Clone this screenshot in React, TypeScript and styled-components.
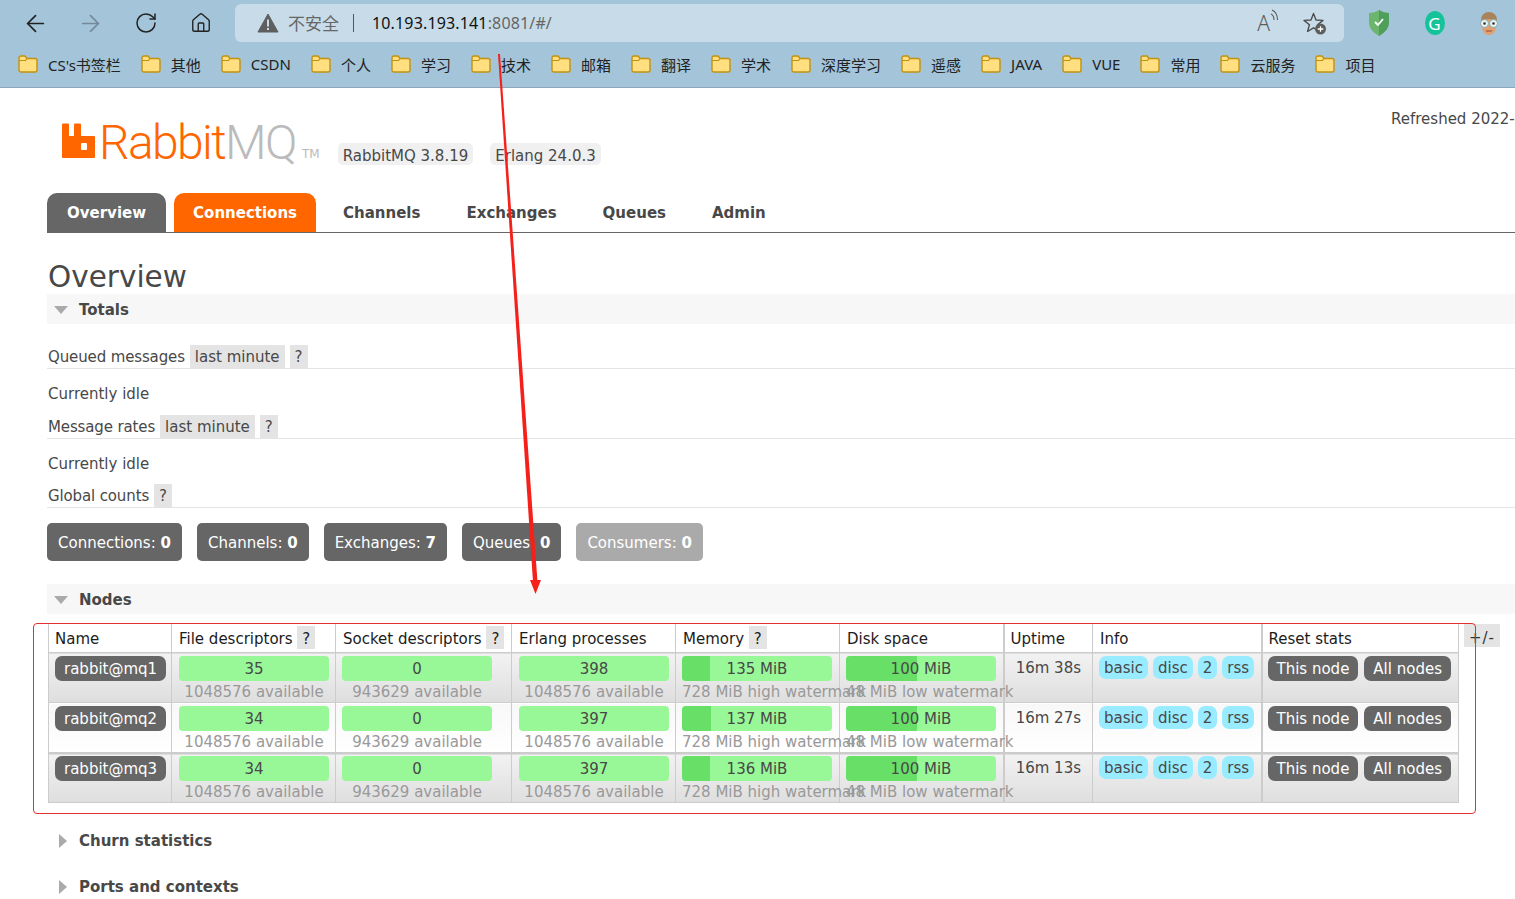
import React from 'react';
import styled, { createGlobalStyle } from 'styled-components';
import { ArrowLeft, ArrowRight, RotateCw, Home } from 'lucide-react';

const GlobalStyle = createGlobalStyle`
  html, body {
    margin: 0;
    padding: 0;
    background: #fff;
  }
  body {
    font-family: 'DejaVu Sans', Verdana, sans-serif;
    font-size: 15px;
    color: #484848;
  }
`;

const bookmarks = [
  "CS's书签栏", '其他', 'CSDN', '个人', '学习', '技术', '邮箱', '翻译', '学术',
  '深度学习', '遥感', 'JAVA', 'VUE', '常用', '云服务', '项目',
];

const tabs = ['Channels', 'Exchanges', 'Queues', 'Admin'];

const counts = [
  { label: 'Connections', value: 0 },
  { label: 'Channels', value: 0 },
  { label: 'Exchanges', value: 7 },
  { label: 'Queues', value: 0 },
  { label: 'Consumers', value: 0, muted: true },
];

const nodes = [
  { name: 'rabbit@mq1', fd: 35, proc: 398, mem: 135, memFill: 28, uptime: '16m 38s' },
  { name: 'rabbit@mq2', fd: 34, proc: 397, mem: 137, memFill: 29, uptime: '16m 27s' },
  { name: 'rabbit@mq3', fd: 34, proc: 397, mem: 136, memFill: 28, uptime: '16m 13s' },
];

const FolderIcon = () => (
  <svg width="20" height="18" viewBox="0 0 20 18">
    <path
      d="M1 4.5V3a2 2 0 0 1 2-2h4l2 2.5h8a2 2 0 0 1 2 2V15a2 2 0 0 1-2 2H3a2 2 0 0 1-2-2z"
      fill="#ffdf80"
      stroke="#c2920e"
      strokeWidth="1.4"
    />
    <path d="M1 5.5h6.5L9 3.5" fill="none" stroke="#c2920e" strokeWidth="1.2" />
  </svg>
);

const WarningIcon = () => (
  <svg width="22" height="20" viewBox="0 0 22 20">
    <path d="M11 1 21 19H1z" fill="#5f5f5f" stroke="#5f5f5f" strokeLinejoin="round" />
    <rect x="10" y="6.5" width="2" height="7" fill="#c7dce8" />
    <rect x="10" y="15" width="2" height="2" fill="#c7dce8" />
  </svg>
);

const WavesIcon = () => (
  <svg width="9" height="16" viewBox="0 0 9 16" fill="none" stroke="#5c5c5c" strokeWidth="1.1">
    <path d="M1 5c2 1 3 3 3 6" />
    <path d="M2 1c3.500 1.500 5.500 5 5.500 10" />
  </svg>
);

const StarPlusIcon = () => (
  <svg width="24" height="24" viewBox="0 0 24 24">
    <path
      d="M10.500 2.500 13 9l7 .4-5.400 4.400 1.800 6.700-5.900-3.700-5.900 3.700 1.800-6.700L1 9.400 8 9z"
      fill="none"
      stroke="#4f4f4f"
      strokeWidth="1.400"
      strokeLinejoin="round"
    />
    <circle cx="17.500" cy="18" r="5.500" fill="#5d5d5d" />
    <path d="M17.500 15.200v5.600M14.700 18h5.600" stroke="#fff" strokeWidth="1.300" />
  </svg>
);

const ShieldIcon = () => (
  <svg width="22" height="28" viewBox="0 0 22 28">
    <path d="M11 1c3 2 6 3 10 3v9c0 7-5 11-10 14C6 24 1 20 1 13V4c4 0 7-1 10-3z" fill="#6cb56d" />
    <path d="M11 1c3 2 6 3 10 3v9c0 7-5 11-10 14z" fill="#4f9f5c" />
    <path d="M7 13l3 3 5-6" fill="none" stroke="#fff" strokeWidth="1.800" />
  </svg>
);

const AvatarIcon = () => (
  <svg width="20" height="26" viewBox="0 0 20 26">
    <path d="M2 10a8 8 0 0 1 16 0v5H2z" fill="#a8825a" />
    <ellipse cx="10" cy="17" rx="7" ry="8" fill="#e0a070" />
    <circle cx="5.500" cy="13.500" r="4" fill="#e8f4f4" stroke="#8aa" strokeWidth="1" />
    <circle cx="14.500" cy="13.500" r="4" fill="#e8f4f4" stroke="#8aa" strokeWidth="1" />
    <circle cx="5.500" cy="13.500" r="1.300" fill="#333" />
    <circle cx="14.500" cy="13.500" r="1.300" fill="#333" />
    <path d="M7 21h6" stroke="#a05a40" strokeWidth="1.200" />
  </svg>
);

const LogoMark = () => (
  <svg width="33" height="35" viewBox="0 0 33 35">
    <path
      d="M0 1.500a1 1 0 0 1 1-1h5a1 1 0 0 1 1 1V13h5V1.500a1 1 0 0 1 1-1h5a1 1 0 0 1 1 1V13h13a1 1 0 0 1 1 1v20a1 1 0 0 1-1 1H1a1 1 0 0 1-1-1z"
      fill="#f60"
    />
    <rect x="19" y="20" width="6" height="7" rx="1" fill="#fff" />
  </svg>
);

const App: React.FC = () => (
  <Page>
    <GlobalStyle />
    <BrowserChrome>
      <Toolbar>
        <NavButtons>
          <ArrowLeft size={27} color="#222" strokeWidth={1.500} />
          <ArrowRight size={27} color="#74899a" strokeWidth={1.500} />
          <RotateCw size={24} color="#222" strokeWidth={1.500} />
          <Home size={22} color="#222" strokeWidth={1.500} />
        </NavButtons>
        <AddressBar>
          <WarningIcon />
          <Insecure>不安全</Insecure>
          <Divider />
          <Url>
            10.193.193.141<UrlRest>:8081/#/</UrlRest>
          </Url>
          <AddressActions>
            <ReadAloud>
              <span>A</span>
              <WavesIcon />
            </ReadAloud>
            <StarPlusIcon />
          </AddressActions>
        </AddressBar>
        <Extensions>
          <ShieldIcon />
          <GrammarlyBadge>G</GrammarlyBadge>
          <AvatarIcon />
        </Extensions>
      </Toolbar>
      <BookmarkBar>
        {bookmarks.map((name) => (
          <Bookmark key={name}>
            <FolderIcon />
            {name}
          </Bookmark>
        ))}
      </BookmarkBar>
    </BrowserChrome>

    <Content>
      <Header>
        <Brand>
          <LogoMark />
          <LogoText>
            Rabbit<LogoGrey>MQ</LogoGrey>
          </LogoText>
          <Trademark>TM</Trademark>
          <Version>RabbitMQ 3.8.19</Version>
          <Version>Erlang 24.0.3</Version>
        </Brand>
        <Refreshed>Refreshed 2022-04-09 16:27:38</Refreshed>
      </Header>

      <TabBar>
        <Tab $bg="#666666">Overview</Tab>
        <Tab $bg="#ff6600">Connections</Tab>
        {tabs.map((tab) => (
          <Tab key={tab}>{tab}</Tab>
        ))}
      </TabBar>

      <Title>Overview</Title>
      <SectionBar>
        <TriangleDown />
        Totals
      </SectionBar>

      <LegendRow $top={21}>
        Queued messages<Pill>last minute</Pill>
        <Pill>?</Pill>
      </LegendRow>
      <IdleText $top={15}>Currently idle</IdleText>
      <LegendRow $top={11}>
        Message rates<Pill>last minute</Pill>
        <Pill>?</Pill>
      </LegendRow>
      <IdleText $top={15}>Currently idle</IdleText>
      <LegendRow $top={10}>
        Global counts<Pill>?</Pill>
      </LegendRow>

      <CountRow>
        {counts.map((c) => (
          <CountBox key={c.label} $muted={c.muted}>
            {c.label}: <b>{c.value}</b>
          </CountBox>
        ))}
      </CountRow>

      <SectionBar $top={23}>
        <TriangleDown />
        Nodes
      </SectionBar>

      <NodesArea>
        <NodesTable>
          <thead>
            <tr>
              <HeadCell $w={123}>Name</HeadCell>
              <HeadCell $w={164}>
                File descriptors <Hint>?</Hint>
              </HeadCell>
              <HeadCell $w={176}>
                Socket descriptors <Hint>?</Hint>
              </HeadCell>
              <HeadCell $w={164}>Erlang processes</HeadCell>
              <HeadCell $w={164}>
                Memory <Hint>?</Hint>
              </HeadCell>
              <HeadCell $w={164}>Disk space</HeadCell>
              <HeadCell $w={89} $heavy>
                Uptime
              </HeadCell>
              <HeadCell $w={169}>Info</HeadCell>
              <HeadCell $w={197} $heavy>
                Reset stats
              </HeadCell>
            </tr>
          </thead>
          <tbody>
            {nodes.map((node, i) => (
              <NodeRow key={node.name} $alt={i % 2 === 0} $thick={i === 2}>
                <Cell>
                  <DarkButton>{node.name}</DarkButton>
                </Cell>
                <Cell $wide>
                  <Meter>
                    <MeterBar>{node.fd}</MeterBar>
                    <MeterSub>1048576 available</MeterSub>
                  </Meter>
                </Cell>
                <Cell>
                  <Meter>
                    <MeterBar>0</MeterBar>
                    <MeterSub>943629 available</MeterSub>
                  </Meter>
                </Cell>
                <Cell $wide>
                  <Meter>
                    <MeterBar>{node.proc}</MeterBar>
                    <MeterSub>1048576 available</MeterSub>
                  </Meter>
                </Cell>
                <Cell>
                  <Meter>
                    <MeterBar>
                      <MeterFill style={{ width: node.memFill }} />
                      <MeterLabel>{node.mem} MiB</MeterLabel>
                    </MeterBar>
                    <MeterSub>728 MiB high watermark</MeterSub>
                  </Meter>
                </Cell>
                <Cell>
                  <Meter>
                    <MeterBar>
                      <MeterFill style={{ width: 71 }} />
                      <MeterLabel>100 MiB</MeterLabel>
                    </MeterBar>
                    <MeterSub>48 MiB low watermark</MeterSub>
                  </Meter>
                </Cell>
                <UptimeCell $heavy>{node.uptime}</UptimeCell>
                <Cell>
                  <TagList>
                    <Tag>basic</Tag>
                    <Tag>disc</Tag>
                    <Tag>2</Tag>
                    <Tag>rss</Tag>
                  </TagList>
                </Cell>
                <Cell $heavy>
                  <ResetButtons>
                    <DarkButton>This node</DarkButton>
                    <DarkButton>All nodes</DarkButton>
                  </ResetButtons>
                </Cell>
              </NodeRow>
            ))}
          </tbody>
        </NodesTable>
        <ColumnToggle>+/-</ColumnToggle>
      </NodesArea>

      <CollapsedRow $top={28}>
        <TriangleRight />
        Churn statistics
      </CollapsedRow>
      <CollapsedRow $top={26}>
        <TriangleRight />
        Ports and contexts
      </CollapsedRow>
    </Content>

    <RedFrame />
    <RedArrow viewBox="0 0 1515 899">
      <polygon points="498,54 500,54 537.500,582 533,582" fill="#f5201a" />
      <polygon points="530,580 541,580 535.500,594" fill="#f5201a" />
    </RedArrow>
  </Page>
);

export default App;

const Page = styled.div`
  position: relative;
  width: 1515px;
  height: 899px;
  overflow: hidden;
  background: #fff;
`;

const BrowserChrome = styled.div`
  height: 87px;
  background: #a3c4d9;
  border-bottom: 1px solid #8ba6b8;
  font-family: 'Noto Sans', 'Noto Sans CJK SC', sans-serif;
`;

const Toolbar = styled.div`
  display: flex;
  align-items: center;
  height: 46px;
`;

const NavButtons = styled.div`
  display: grid;
  grid-template-columns: repeat(4, 55px);
  justify-items: center;
  align-items: center;
  margin-left: 8px;
  margin-right: 7px;
`;

const AddressBar = styled.div`
  display: flex;
  align-items: center;
  width: 1109px;
  height: 38px;
  box-sizing: border-box;
  padding: 0 17px 0 22px;
  background: #c7dce8;
  border-radius: 6px;
`;

const Insecure = styled.span`
  margin-left: 9px;
  margin-bottom: 2px;
  font-size: 17px;
  color: #666;
`;

const Divider = styled.span`
  width: 1px;
  height: 18px;
  margin: 0 18px 0 14px;
  background: #555;
`;

const Url = styled.span`
  font-size: 16px;
  letter-spacing: 0.15px;
  color: #111;
`;

const UrlRest = styled.span`
  color: #666;
`;

const AddressActions = styled.div`
  display: flex;
  align-items: center;
  gap: 24px;
  margin-left: auto;
`;

const ReadAloud = styled.div`
  display: flex;
  align-items: flex-start;
  font-size: 21px;
  font-weight: 300;
  color: #5c5c5c;
`;

const Extensions = styled.div`
  display: flex;
  align-items: center;
  justify-content: space-between;
  width: 131px;
  margin-left: 24px;
`;

const GrammarlyBadge = styled.span`
  display: flex;
  align-items: center;
  justify-content: center;
  width: 20px;
  height: 24px;
  border-radius: 50%;
  background: #15c39a;
  color: #fff;
  font-size: 17px;
`;

const BookmarkBar = styled.div`
  display: flex;
  align-items: center;
  gap: 20px;
  height: 36px;
  padding-left: 18px;
`;

const Bookmark = styled.span`
  display: flex;
  align-items: center;
  gap: 10px;
  font-size: 15px;
  color: #222;
  white-space: nowrap;
`;

const Content = styled.div`
  padding-left: 47px;
`;

const Header = styled.header`
  display: grid;
  grid-template-columns: 1344px 1fr;
  height: 105px;
  overflow: hidden;
`;

const Brand = styled.div`
  display: flex;
  align-items: flex-end;
  height: 70px;
  padding-left: 15px;
`;

const LogoText = styled.span`
  margin-left: 4px;
  margin-bottom: -13px;
  font-family: 'Roboto', sans-serif;
  font-weight: 300;
  font-size: 48px;
  line-height: 56px;
  letter-spacing: -1.6px;
  color: #f60;
`;

const LogoGrey = styled.span`
  color: #bbb;
`;

const Trademark = styled.span`
  margin: 0 18px -3px 6px;
  font-size: 12px;
  color: #bbb;
`;

const Version = styled.span`
  margin-right: 17px;
  margin-bottom: -7px;
  padding: 0 5px;
  height: 22px;
  line-height: 26px;
  background: #f0f0f0;
  border-radius: 5px;
  white-space: nowrap;
`;

const Refreshed = styled.div`
  margin-top: 22px;
  white-space: nowrap;
`;

const TabBar = styled.nav`
  display: flex;
  gap: 8px;
  height: 39px;
  border-bottom: 1px solid #666;
`;

const Tab = styled.a<{ $bg?: string }>`
  padding: 0 19px;
  line-height: 41px;
  font-weight: 700;
  font-size: 15px;
  border-radius: 10px 10px 0 0;
  color: ${({ $bg }) => ($bg ? '#fff' : '#484848')};
  background: ${({ $bg }) => $bg ?? 'transparent'};

  &:first-child {
    padding: 0 20px;
  }
`;

const Title = styled.h1`
  margin: 28px 0 0 1px;
  font-size: 29.5px;
  font-weight: 400;
  line-height: 33px;
`;

const SectionBar = styled.div<{ $top?: number }>`
  display: flex;
  align-items: center;
  height: 30px;
  box-sizing: border-box;
  margin-top: ${({ $top }) => $top ?? 0}px;
  padding: 2px 0 0 7px;
  background: #f7f7f7;
  font-weight: 700;
`;

const TriangleDown = styled.span`
  width: 0;
  height: 0;
  margin-right: 11px;
  border-left: 7px solid transparent;
  border-right: 7px solid transparent;
  border-top: 8px solid #aaa;
`;

const TriangleRight = styled.span`
  width: 0;
  height: 0;
  margin-left: 12px;
  margin-right: 12px;
  border-top: 7px solid transparent;
  border-bottom: 7px solid transparent;
  border-left: 8px solid #aaa;
`;

const LegendRow = styled.div<{ $top: number }>`
  display: flex;
  align-items: flex-start;
  height: 23px;
  margin-top: ${({ $top }) => $top}px;
  padding-left: 1px;
  line-height: 25px;
  letter-spacing: -0.13px;
  white-space: nowrap;
  border-bottom: 1px solid #e4e4e4;
`;

const Pill = styled.span`
  margin-left: 5px;
  padding: 0 5px;
  letter-spacing: 0;
  background: #e4e4e4;
  height: 23px;
`;

const IdleText = styled.div<{ $top: number }>`
  margin-top: ${({ $top }) => $top}px;
  padding-left: 1px;
  line-height: 20px;
`;

const CountRow = styled.div`
  display: flex;
  gap: 15px;
  margin-top: 15px;
`;

const CountBox = styled.div<{ $muted?: boolean }>`
  height: 38px;
  padding: 0 11px;
  line-height: 41px;
  border-radius: 5px;
  color: #fff;
  background: ${({ $muted }) => ($muted ? '#aaa' : '#666')};
  white-space: nowrap;
`;

const NodesArea = styled.div`
  display: flex;
  align-items: flex-start;
  gap: 5px;
  margin-top: 9px;
  margin-left: 1px;
`;

const NodesTable = styled.table`
  width: 1410px;
  table-layout: fixed;
  border-collapse: collapse;
`;

const HeadCell = styled.th<{ $w: number; $heavy?: boolean }>`
  width: ${({ $w }) => $w}px;
  height: 29px;
  box-sizing: border-box;
  padding: 3px 6px 0 ${({ $heavy }) => ($heavy ? 6 : 7)}px;
  line-height: 25px;
  background: #fff;
  color: #1c1c1c;
  font-weight: 400;
  text-align: left;
  white-space: nowrap;
  border: 1px solid #ccc;
  border-top: none;
  border-left-width: ${({ $heavy }) => ($heavy ? 2 : 1)}px;

  &:first-child {
    padding-left: 6px;
  }
`;

const Hint = styled.span`
  display: inline-block;
  padding: 0 5px;
  height: 23px;
  line-height: 27px;
  background: #e4e4e4;
`;

const NodeRow = styled.tr<{ $alt: boolean; $thick: boolean }>`
  background: ${({ $alt }) =>
    $alt ? 'linear-gradient(#f2f2f2, #dedede)' : 'linear-gradient(#f8f8f8, #ffffff)'};
  border-top: ${({ $thick }) => ($thick ? 2 : 1)}px solid #ccc;
`;

const Cell = styled.td<{ $heavy?: boolean; $wide?: boolean }>`
  height: 50px;
  box-sizing: border-box;
  padding: 3px 6px 0 ${({ $heavy, $wide }) => ($heavy ? 5 : $wide ? 7 : 6)}px;
  vertical-align: top;
  border: 1px solid #ccc;
  border-left-width: ${({ $heavy }) => ($heavy ? 2 : 1)}px;

  tr:last-child > & {
    padding-top: 2px;
  }
`;

const UptimeCell = styled(Cell)`
  padding-right: 11px;
  text-align: right;
  line-height: 25px;
`;

const DarkButton = styled.span`
  display: inline-block;
  height: 25px;
  padding: 0 9px;
  line-height: 27px;
  background: #666;
  color: #fff;
  border-radius: 7px;
  white-space: nowrap;
`;

const Meter = styled.div`
  width: 150px;
  text-align: center;
  white-space: nowrap;
`;

const MeterBar = styled.div`
  position: relative;
  height: 25px;
  line-height: 27px;
  background: #98f898;
  border-radius: 4px;
  overflow: hidden;
`;

const MeterFill = styled.div`
  position: absolute;
  left: 0;
  top: 0;
  bottom: 0;
  background: #68e068;
`;

const MeterLabel = styled.span`
  position: relative;
`;

const MeterSub = styled.div`
  height: 20px;
  line-height: 22px;
  color: #999;
`;

const TagList = styled.div`
  display: flex;
  gap: 5px;
`;

const Tag = styled.span`
  height: 23px;
  padding: 0 5px;
  line-height: 24px;
  background: #99ebff;
  border-radius: 7px;
  white-space: nowrap;
`;

const ResetButtons = styled.div`
  display: flex;
  gap: 6px;
`;

const ColumnToggle = styled.div`
  height: 23px;
  margin-top: 1px;
  padding: 0 5px;
  line-height: 28px;
  letter-spacing: 1px;
  background: #e4e4e4;
  color: #333;
`;

const CollapsedRow = styled.div<{ $top: number }>`
  display: flex;
  align-items: center;
  height: 20px;
  margin-top: ${({ $top }) => $top}px;
  font-weight: 700;
`;

const RedFrame = styled.div`
  position: absolute;
  left: 33px;
  top: 623px;
  width: 1441px;
  height: 189px;
  border: 1px solid #e03030;
  border-radius: 4px;
  pointer-events: none;
`;

const RedArrow = styled.svg`
  position: absolute;
  left: 0;
  top: 0;
  width: 1515px;
  height: 899px;
  pointer-events: none;
`;
